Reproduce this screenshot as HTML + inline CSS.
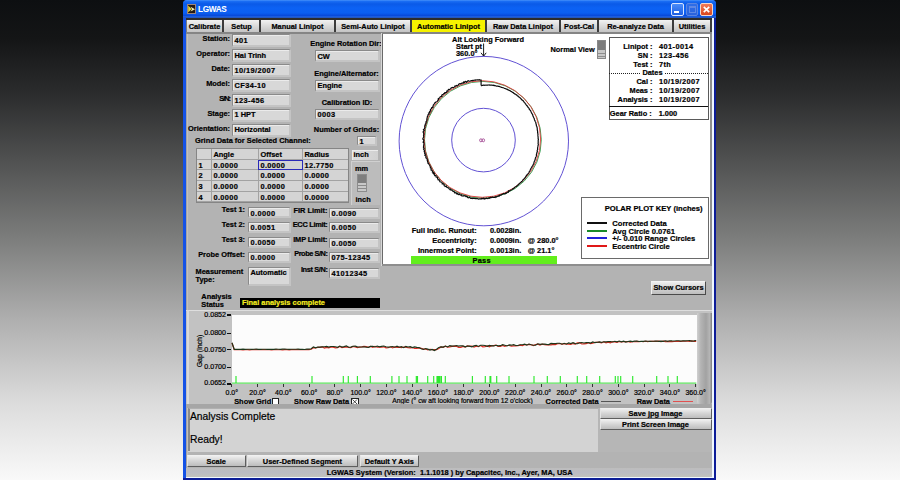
<!DOCTYPE html>
<html><head><meta charset="utf-8"><style>
*{margin:0;padding:0;box-sizing:border-box}
html,body{width:900px;height:480px;overflow:hidden}
body{position:relative;background:linear-gradient(to bottom,#0d0f11 0%,#141516 8%,#2c2d2e 20%,#4f5050 33%,#7d7e7d 50%,#b0b0b0 67%,#dcdcdc 84%,#f9f9f9 100%);font-family:"Liberation Sans",sans-serif;font-weight:bold;font-size:7.4px;color:#000;-webkit-text-stroke-width:0.2px}
.a{position:absolute;white-space:pre;line-height:1}
.fld{position:absolute;background:#d8d8d8;border-top:1px solid #8a8a8a;border-left:1px solid #8a8a8a;border-right:2px solid #c4c4c4;border-bottom:2px solid #c4c4c4;box-shadow:inset 1px 1px 0 #ebebeb}
.fld span{position:absolute;left:1.5px;top:1.6px;white-space:pre;line-height:1}
.tab{position:absolute;top:20px;height:12px;background:linear-gradient(to bottom,#f2f2f2,#dadada 50%,#c4c4c4);border-right:2px solid #3c3c3c;text-align:center;line-height:14.4px}
.btn{position:absolute;background:linear-gradient(to bottom,#eeeeee,#d4d4d4 50%,#bdbdbd);border:1px solid #5e5e5e;border-top-color:#f0f0f0;border-left-color:#e4e4e4;text-align:center;white-space:pre}
.c{position:absolute;white-space:pre;line-height:1;text-align:center}
.r{position:absolute;white-space:pre;line-height:1;text-align:right}
</style></head><body>
<div class="a" style="left:183px;top:0px;width:533px;height:480px;background:#0a48d6;border-radius:4px 4px 0 0"></div>
<div class="a" style="left:183px;top:0px;width:533px;height:18px;border-radius:4px 4px 0 0;background:linear-gradient(to bottom,#4a94fa 0%,#1a6ef4 7%,#0a5ae8 22%,#0c62f4 45%,#0b5ff2 72%,#0848d8 88%,#2a6ee6 95%,#1c3c90 100%)"></div>
<div class="a" style="left:186.5px;top:4px;width:9px;height:10px;background:#241a14;border:1px solid #9c867c"></div>
<svg class="a" style="left:186.5px;top:4px" width="9" height="10"><path d="M1.2 1.5 L4.6 5 L1.2 8.5 Z" fill="#e8d830"/><path d="M3.6 2.8 L8 5.2 L3.6 7.4 L5 5.2 Z" fill="#f4f0b0"/></svg>
<div class="a" style="left:198px;top:6.4px;color:#fff;font-size:8.2px;letter-spacing:-0.3px;-webkit-text-stroke-width:0.05px">LGWAS</div>
<div class="a" style="left:671px;top:3px;width:13px;height:13px;border-radius:2px;border:1px solid #d8e4ff;background:linear-gradient(#4a8cf8,#1c5ee4)"></div>
<div class="a" style="left:674px;top:11px;width:5px;height:2px;background:#fff"></div>
<div class="a" style="left:686px;top:3px;width:12px;height:13px;border-radius:2px;border:1px solid #5a84e0;background:linear-gradient(#2e6ee8,#2a62dc)"></div>
<div class="a" style="left:688.5px;top:5.5px;width:7px;height:7px;border:1px solid #5f88e4;border-top-width:2px"></div>
<div class="a" style="left:700px;top:3px;width:13px;height:13px;border-radius:2px;border:1px solid #f4d8cc;background:linear-gradient(#f07a58,#d8461e)"></div>
<svg class="a" style="left:700px;top:3px" width="13" height="13"><path d="M3.8 3.8 L9.2 9.2 M9.2 3.8 L3.8 9.2" stroke="#fff" stroke-width="1.7"/></svg>
<div class="a" style="left:185.5px;top:18px;width:527px;height:459px;background:#b3b3b3"></div>
<div class="a" style="left:185.5px;top:18px;width:1px;height:459px;background:#a4a4a4"></div>
<div class="a" style="left:186.5px;top:18px;width:1px;height:459px;background:#c4c0bc"></div>
<div class="a" style="left:186px;top:18px;width:527px;height:2px;background:#2c2c2c"></div>
<div class="a" style="left:186px;top:20px;width:527px;height:13px;background:#7c7c7c"></div>
<div class="a" style="left:186px;top:32px;width:527px;height:2px;background:#858585"></div>
<div class="tab" style="left:187px;width:37px">Calibrate</div>
<div class="tab" style="left:224px;width:37px">Setup</div>
<div class="tab" style="left:261px;width:75px">Manual Linipot</div>
<div class="tab" style="left:336px;width:76px">Semi-Auto Linipot</div>
<div class="tab" style="left:412px;width:75px;background:#f6f200">Automatic Linipot</div>
<div class="tab" style="left:487px;width:74px">Raw Data Linipot</div>
<div class="tab" style="left:561px;width:38px">Post-Cal</div>
<div class="tab" style="left:599px;width:75px">Re-analyze Data</div>
<div class="tab" style="left:674px;width:38px">Utilities</div>
<div class="r" style="right:670px;top:35.4px;">Station:</div>
<div class="fld" style="left:232px;top:34.4px;width:59px;height:13px;"><span style="top:1.5px;letter-spacing:0.4px">401</span></div>
<div class="r" style="right:670px;top:50.3px;">Operator:</div>
<div class="fld" style="left:232px;top:49.3px;width:59px;height:13px;"><span style="top:1.5px">Hai Trinh</span></div>
<div class="r" style="right:670px;top:65.2px;">Date:</div>
<div class="fld" style="left:232px;top:64.2px;width:59px;height:13px;"><span style="top:1.5px;letter-spacing:0.4px">10/19/2007</span></div>
<div class="r" style="right:670px;top:80.1px;">Model:</div>
<div class="fld" style="left:232px;top:79.1px;width:59px;height:13px;"><span style="top:1.5px;letter-spacing:0.4px">CF34-10</span></div>
<div class="r" style="right:670px;top:95.0px;;letter-spacing:-1.0px">S/N:</div>
<div class="fld" style="left:232px;top:94px;width:59px;height:13px;"><span style="top:1.5px;letter-spacing:0.4px">123-456</span></div>
<div class="r" style="right:670px;top:109.9px;">Stage:</div>
<div class="fld" style="left:232px;top:108.9px;width:59px;height:13px;"><span style="top:1.5px">1 HPT</span></div>
<div class="r" style="right:670px;top:124.8px;">Orientation:</div>
<div class="fld" style="left:232px;top:123.8px;width:59px;height:13px;"><span style="top:1.5px">Horizontal</span></div>
<div class="c" style="left:246.0px;top:40.3px;width:200px;">Engine Rotation Dir:</div>
<div class="fld" style="left:315px;top:50px;width:65px;height:12px;"><span>CW</span></div>
<div class="c" style="left:246.5px;top:70.3px;width:200px;">Engine/Alternator:</div>
<div class="fld" style="left:315px;top:79.5px;width:65px;height:12px;"><span>Engine</span></div>
<div class="c" style="left:247.0px;top:99.2px;width:200px;">Calibration ID:</div>
<div class="fld" style="left:315px;top:109px;width:65px;height:11px;"><span style="top:1.2px;letter-spacing:0.4px">0003</span></div>
<div class="c" style="left:246.5px;top:126.2px;width:200px;">Number of Grinds:</div>
<div class="fld" style="left:357px;top:135.5px;width:20px;height:10px;"><span style="top:1px">1</span></div>
<div class="a" style="left:195px;top:137px;">Grind Data for Selected Channel:</div>
<div class="a" style="left:196px;top:148px;width:153px;height:55px;background:#a2a2a2;border:1px solid #858585"></div>
<div class="a" style="left:197px;top:149px;width:14px;height:9.8px;background:#d4d4d4"></div>
<div class="a" style="left:198.5px;top:151.0px;"></div>
<div class="a" style="left:212px;top:149px;width:46px;height:9.8px;background:#d4d4d4"></div>
<div class="a" style="left:213.5px;top:151.0px;">Angle</div>
<div class="a" style="left:259px;top:149px;width:43px;height:9.8px;background:#d4d4d4"></div>
<div class="a" style="left:260.5px;top:151.0px;">Offset</div>
<div class="a" style="left:303px;top:149px;width:45px;height:9.8px;background:#d4d4d4"></div>
<div class="a" style="left:304.5px;top:151.0px;">Radius</div>
<div class="a" style="left:197px;top:159.8px;width:14px;height:9.6px;background:#d4d4d4"></div>
<div class="a" style="left:198.5px;top:161.8px;">1</div>
<div class="a" style="left:212px;top:159.8px;width:46px;height:9.6px;background:#d4d4d4"></div>
<div class="a" style="left:213.5px;top:161.8px;letter-spacing:0.35px">0.0000</div>
<div class="a" style="left:259px;top:159.8px;width:43px;height:9.6px;background:#d4d4d4"></div>
<div class="a" style="left:260.5px;top:161.8px;letter-spacing:0.35px">0.0000</div>
<div class="a" style="left:303px;top:159.8px;width:45px;height:9.6px;background:#d4d4d4"></div>
<div class="a" style="left:304.5px;top:161.8px;letter-spacing:0.35px">12.7750</div>
<div class="a" style="left:197px;top:170.4px;width:14px;height:9.6px;background:#d4d4d4"></div>
<div class="a" style="left:198.5px;top:172.4px;">2</div>
<div class="a" style="left:212px;top:170.4px;width:46px;height:9.6px;background:#d4d4d4"></div>
<div class="a" style="left:213.5px;top:172.4px;letter-spacing:0.35px">0.0000</div>
<div class="a" style="left:259px;top:170.4px;width:43px;height:9.6px;background:#d4d4d4"></div>
<div class="a" style="left:260.5px;top:172.4px;letter-spacing:0.35px">0.0000</div>
<div class="a" style="left:303px;top:170.4px;width:45px;height:9.6px;background:#d4d4d4"></div>
<div class="a" style="left:304.5px;top:172.4px;letter-spacing:0.35px">0.0000</div>
<div class="a" style="left:197px;top:181px;width:14px;height:9.6px;background:#d4d4d4"></div>
<div class="a" style="left:198.5px;top:183.0px;">3</div>
<div class="a" style="left:212px;top:181px;width:46px;height:9.6px;background:#d4d4d4"></div>
<div class="a" style="left:213.5px;top:183.0px;letter-spacing:0.35px">0.0000</div>
<div class="a" style="left:259px;top:181px;width:43px;height:9.6px;background:#d4d4d4"></div>
<div class="a" style="left:260.5px;top:183.0px;letter-spacing:0.35px">0.0000</div>
<div class="a" style="left:303px;top:181px;width:45px;height:9.6px;background:#d4d4d4"></div>
<div class="a" style="left:304.5px;top:183.0px;letter-spacing:0.35px">0.0000</div>
<div class="a" style="left:197px;top:191.6px;width:14px;height:9.8px;background:#d4d4d4"></div>
<div class="a" style="left:198.5px;top:193.6px;">4</div>
<div class="a" style="left:212px;top:191.6px;width:46px;height:9.8px;background:#d4d4d4"></div>
<div class="a" style="left:213.5px;top:193.6px;letter-spacing:0.35px">0.0000</div>
<div class="a" style="left:259px;top:191.6px;width:43px;height:9.8px;background:#d4d4d4"></div>
<div class="a" style="left:260.5px;top:193.6px;letter-spacing:0.35px">0.0000</div>
<div class="a" style="left:303px;top:191.6px;width:45px;height:9.8px;background:#d4d4d4"></div>
<div class="a" style="left:304.5px;top:193.6px;letter-spacing:0.35px">0.0000</div>
<div class="a" style="left:258.3px;top:159.5px;width:44.5px;height:10.6px;border:1px solid #2a2ab8"></div>
<div class="a" style="left:351px;top:161px;width:29px;height:44px;background:#bcbcbc;border-top:1px solid #d0d0d0;border-left:1px solid #d0d0d0"></div>
<div class="fld" style="left:352px;top:149.5px;width:26px;height:10px;border:none;background:linear-gradient(to right,#dedede,#d0d0d0)"><span style="top:1.6px">inch</span></div>
<div class="a" style="left:355px;top:165.3px;">mm</div>
<div class="a" style="left:356.5px;top:173.5px;width:10px;height:18px;background:#c8c8c8;border:1px solid #8c8c8c"></div>
<div class="a" style="left:357.5px;top:174.5px;width:8px;height:8.5px;background:#7e7e7e"></div>
<div class="a" style="left:357.5px;top:185px;width:8px;height:1px;background:#8a8a8a"></div>
<div class="a" style="left:357.5px;top:188px;width:8px;height:1px;background:#8a8a8a"></div>
<div class="a" style="left:355.5px;top:195.7px;">inch</div>
<div class="r" style="right:655px;top:206.2px;">Test 1:</div>
<div class="fld" style="left:248px;top:207px;width:43px;height:11px;"><span style="top:1.5px;letter-spacing:0.4px">0.0000</span></div>
<div class="r" style="right:572.5px;top:206.5px;">FIR Limit:</div>
<div class="fld" style="left:329px;top:208px;width:51px;height:11px;"><span style="top:1.2px;letter-spacing:0.4px">0.0090</span></div>
<div class="r" style="right:655px;top:220.7px;">Test 2:</div>
<div class="fld" style="left:248px;top:221.5px;width:43px;height:11px;"><span style="top:1.5px;letter-spacing:0.4px">0.0051</span></div>
<div class="r" style="right:572.5px;top:220.5px;;letter-spacing:-0.3px">ECC Limit:</div>
<div class="fld" style="left:329px;top:222px;width:51px;height:11px;"><span style="top:1.2px;letter-spacing:0.4px">0.0050</span></div>
<div class="r" style="right:655px;top:235.7px;">Test 3:</div>
<div class="fld" style="left:248px;top:236.5px;width:43px;height:11px;"><span style="top:1.5px;letter-spacing:0.4px">0.0050</span></div>
<div class="r" style="right:572.5px;top:236.0px;;letter-spacing:-0.08px">IMP Limit:</div>
<div class="fld" style="left:329px;top:237.5px;width:51px;height:11px;"><span style="top:1.2px;letter-spacing:0.4px">0.0050</span></div>
<div class="r" style="right:655px;top:250.7px;">Probe Offset:</div>
<div class="fld" style="left:248px;top:251.5px;width:43px;height:11px;"><span style="top:1.5px;letter-spacing:0.4px">0.0000</span></div>
<div class="r" style="right:572.5px;top:250.0px;;letter-spacing:-0.45px">Probe S/N:</div>
<div class="fld" style="left:329px;top:251.5px;width:51px;height:11px;"><span style="top:1.2px;letter-spacing:0.4px">075-12345</span></div>
<div class="a" style="left:195.5px;top:268px;">Measurement</div>
<div class="a" style="left:195.5px;top:275.8px;">Type:</div>
<div class="fld" style="left:248px;top:266.5px;width:43px;height:19px;"><span style="top:1.5px">Automatic</span></div>
<div class="r" style="right:572.5px;top:266.2px;;letter-spacing:-0.38px">Inst S/N:</div>
<div class="fld" style="left:329px;top:267.5px;width:51px;height:11px;"><span style="top:1.2px;letter-spacing:0.4px">41012345</span></div>
<div class="a" style="left:381px;top:33px;width:1px;height:233px;background:#d8d8d8"></div>
<div class="a" style="left:382px;top:34px;width:328px;height:231px;background:#ffffff;border-left:1px solid #6a6a6a"></div>
<div class="a" style="left:710px;top:34px;width:2.5px;height:231px;background:#8e8e8e"></div>
<div class="a" style="left:382px;top:264px;width:331px;height:2px;background:#8e8e8e"></div>
<div class="c" style="left:388.0px;top:36px;width:200px;">Alt Looking Forward</div>
<div class="a" style="left:456px;top:42.7px;">Start pt</div>
<div class="a" style="left:456px;top:50px;">360.0°</div>
<svg class="a" style="left:479px;top:43px" width="10" height="15"><path d="M4.6 0.5 V13 M2 9.8 L4.6 13.2 L7.2 9.8" stroke="#000" stroke-width="0.9" fill="none"/></svg>
<div class="a" style="left:550.5px;top:46.3px;">Normal View</div>
<div class="a" style="left:597px;top:40px;width:9px;height:18.5px;background:#c8c8c8;border:1px solid #8a8a8a"></div>
<div class="a" style="left:598px;top:41px;width:7px;height:9px;background:#7c7c7c"></div>
<div class="a" style="left:598px;top:52.5px;width:7px;height:1px;background:#8e8e8e"></div>
<div class="a" style="left:598px;top:55.5px;width:7px;height:1px;background:#8e8e8e"></div>
<svg class="a" style="left:0;top:0" width="900" height="480"><circle cx="483.8" cy="141.1" r="84.7" fill="none" stroke="#6252d4" stroke-width="1"/><circle cx="483.5" cy="140.1" r="31.8" fill="none" stroke="#6252d4" stroke-width="1"/><circle cx="482.9" cy="139.8" r="58.4" fill="none" stroke="#2a9a4a" stroke-width="0.9"/><circle cx="482.3" cy="139.0" r="58.3" fill="none" stroke="#e03a3a" stroke-width="0.9"/><path d="M481.10 85.57 L481.71 85.55 L482.32 85.27 L482.92 85.43 L483.54 85.18 L484.15 85.19 L484.76 85.27 L485.39 85.05 L485.99 85.21 L486.63 85.03 L487.23 85.17 L487.85 85.16 L488.49 85.03 L489.14 84.89 L489.72 85.19 L490.35 85.18 L491.00 85.07 L491.65 84.99 L492.25 85.20 L492.85 85.34 L493.53 85.19 L494.07 85.64 L494.77 85.42 L495.33 85.75 L495.94 85.91 L496.56 86.05 L497.20 86.10 L497.88 86.05 L498.41 86.44 L499.08 86.44 L499.71 86.58 L500.28 86.86 L500.92 86.97 L501.45 87.34 L502.06 87.54 L502.69 87.69 L503.37 87.74 L503.93 88.05 L504.51 88.32 L505.15 88.47 L505.72 88.76 L506.28 89.07 L506.96 89.16 L507.53 89.47 L508.02 89.90 L508.67 90.08 L509.24 90.39 L509.88 90.57 L510.42 90.94 L510.89 91.40 L511.61 91.50 L511.97 92.12 L512.60 92.36 L513.22 92.60 L513.63 93.15 L514.25 93.41 L514.68 93.92 L515.37 94.10 L515.92 94.45 L516.40 94.91 L517.00 95.21 L517.37 95.79 L517.99 96.09 L518.47 96.54 L518.97 96.97 L519.43 97.44 L520.03 97.77 L520.55 98.18 L520.90 98.77 L521.43 99.18 L521.72 99.81 L522.38 100.10 L522.82 100.60 L523.38 100.99 L523.78 101.52 L524.06 102.16 L524.53 102.63 L525.05 103.07 L525.27 103.74 L525.83 104.15 L526.15 104.75 L526.54 105.29 L526.92 105.83 L527.55 106.21 L527.73 106.90 L528.15 107.42 L528.58 107.94 L529.11 108.40 L529.20 109.13 L529.69 109.62 L530.07 110.18 L530.53 110.69 L530.85 111.29 L531.19 111.87 L531.31 112.57 L531.68 113.14 L531.97 113.75 L532.46 114.26 L532.78 114.86 L532.78 115.60 L533.07 116.21 L533.36 116.82 L533.63 117.44 L533.98 118.03 L534.27 118.64 L534.39 119.32 L534.53 119.99 L534.92 120.57 L535.13 121.22 L535.42 121.84 L535.77 122.44 L535.87 123.13 L536.00 123.80 L536.22 124.44 L536.42 125.09 L536.35 125.81 L536.84 126.40 L536.95 127.07 L537.14 127.73 L537.25 128.41 L537.22 129.11 L537.35 129.78 L537.35 130.47 L537.66 131.11 L537.54 131.82 L537.63 132.49 L537.77 133.17 L537.83 133.85 L537.97 134.52 L537.92 135.21 L537.95 135.89 L538.06 136.57 L538.07 137.25 L538.21 137.93 L538.10 138.62 L538.45 139.30 L538.35 139.99 L538.16 140.67 L538.19 141.35 L538.22 142.04 L538.20 142.72 L538.07 143.40 L538.31 144.11 L538.32 144.80 L538.06 145.46 L538.00 146.15 L537.77 146.81 L537.69 147.49 L537.70 148.18 L537.57 148.86 L537.69 149.57 L537.32 150.20 L537.14 150.87 L537.38 151.62 L537.08 152.25 L536.79 152.89 L536.79 153.60 L536.43 154.21 L536.46 154.93 L536.46 155.64 L536.23 156.29 L535.98 156.93 L535.62 157.54 L535.45 158.21 L535.17 158.83 L535.17 159.56 L534.86 160.18 L534.72 160.86 L534.31 161.43 L534.02 162.06 L533.98 162.78 L533.78 163.45 L533.46 164.06 L533.16 164.68 L532.88 165.30 L532.56 165.91 L532.08 166.43 L531.88 167.10 L531.51 167.67 L531.07 168.21 L530.75 168.81 L530.50 169.46 L530.15 170.05 L529.95 170.73 L529.69 171.37 L529.16 171.84 L528.95 172.53 L528.59 173.11 L528.20 173.67 L527.62 174.10 L527.18 174.62 L526.78 175.17 L526.37 175.71 L525.96 176.26 L525.67 176.90 L525.33 177.51 L524.88 178.02 L524.33 178.45 L523.94 179.01 L523.54 179.57 L522.87 179.88 L522.58 180.54 L522.18 181.10 L521.68 181.56 L521.19 182.04 L520.63 182.44 L520.06 182.82 L519.73 183.47 L519.11 183.79 L518.73 184.39 L518.26 184.89 L517.60 185.16 L517.08 185.60 L516.69 186.20 L516.11 186.55 L515.44 186.79 L514.89 187.19 L514.36 187.60 L513.98 188.25 L513.41 188.61 L512.70 188.77 L512.29 189.38 L511.76 189.80 L511.12 190.06 L510.48 190.31 L509.94 190.73 L509.28 190.93 L508.49 190.88 L508.44 192.22 L507.66 192.20 L507.00 192.39 L506.61 193.14 L505.75 192.90 L505.36 193.67 L504.72 193.91 L503.81 193.51 L503.22 193.83 L502.62 194.14 L501.97 194.33 L501.50 194.97 L500.73 194.84 L500.17 195.26 L499.43 195.16 L499.08 196.26 L498.24 195.84 L497.64 196.16 L497.03 196.50 L496.49 197.06 L495.69 196.68 L495.18 197.43 L494.41 197.11 L493.76 197.30 L493.11 197.44 L492.33 196.99 L491.77 197.62 L491.06 197.44 L490.36 197.35 L489.85 198.40 L489.08 197.76 L488.46 198.21 L487.83 198.59 L487.14 198.47 L486.45 198.26 L485.80 198.55 L485.13 198.65 L484.48 198.97 L483.76 198.20 L483.12 198.77 L482.44 198.42 L481.77 198.46 L481.10 199.06 L480.43 198.74 L479.75 198.80 L479.07 199.02 L478.39 199.17 L477.75 198.57 L477.06 198.73 L476.40 198.55 L475.73 198.50 L475.04 198.65 L474.40 198.29 L473.72 198.30 L473.07 198.14 L472.32 198.59 L471.70 198.20 L470.99 198.29 L470.31 198.25 L469.81 197.31 L469.08 197.52 L468.32 197.83 L467.69 197.55 L467.23 196.57 L466.59 196.38 L465.85 196.57 L465.32 195.96 L464.62 195.96 L464.04 195.57 L463.19 196.04 L462.50 195.96 L461.82 195.86 L461.49 194.79 L460.62 195.18 L460.02 194.87 L459.62 194.04 L458.66 194.60 L458.00 194.42 L457.74 193.32 L456.77 193.83 L456.43 192.94 L455.78 192.73 L454.91 192.97 L454.39 192.48 L454.17 191.45 L453.43 191.41 L452.79 191.16 L452.31 190.64 L451.82 190.14 L451.17 189.91 L450.34 189.96 L450.23 188.88 L449.32 189.04 L448.83 188.55 L448.57 187.74 L447.80 187.65 L447.05 187.54 L446.59 187.02 L446.38 186.17 L445.17 186.63 L444.79 186.01 L444.12 185.74 L444.27 184.50 L443.63 184.20 L443.31 183.55 L442.22 183.75 L442.13 182.83 L441.75 182.24 L441.03 182.02 L440.14 181.95 L439.73 181.38 L439.74 180.42 L439.38 179.83 L438.24 179.95 L438.10 179.16 L437.53 178.74 L437.65 177.74 L437.24 177.19 L436.23 177.14 L436.05 176.41 L435.97 175.61 L434.74 175.69 L434.62 174.92 L434.06 174.48 L434.37 173.41 L433.22 173.38 L433.63 172.27 L432.46 172.23 L432.50 171.38 L432.26 170.72 L431.69 170.27 L430.96 169.90 L431.30 168.90 L431.11 168.22 L430.37 167.85 L430.35 167.08 L430.18 166.40 L429.82 165.82 L429.65 165.14 L429.19 164.60 L428.79 164.03 L428.52 163.40 L427.75 162.99 L428.01 162.13 L427.52 161.58 L427.63 160.80 L427.20 160.23 L427.34 159.45 L426.85 158.90 L426.90 158.15 L425.87 157.77 L425.88 157.04 L426.09 156.26 L425.58 155.69 L424.86 155.17 L425.65 154.24 L424.65 153.78 L424.95 153.00 L424.72 152.34 L424.18 151.75 L424.56 150.97 L424.30 150.31 L423.96 149.67 L423.50 149.04 L424.15 148.24 L423.48 147.64 L423.53 146.93 L423.54 146.23 L423.74 145.51 L423.74 144.81 L424.03 144.10 L423.89 143.42 L423.92 142.73 L423.08 142.08 L423.64 141.37 L423.73 140.67 L423.81 139.99 L422.90 139.30 L422.87 138.60 L423.12 137.91 L423.60 137.23 L423.68 136.55 L423.65 135.86 L423.50 135.15 L423.91 134.49 L423.62 133.78 L423.90 133.11 L423.15 132.33 L423.22 131.63 L423.81 131.01 L424.27 130.38 L423.52 129.56 L424.41 129.01 L424.47 128.32 L425.02 127.73 L424.71 126.96 L424.74 126.26 L424.86 125.58 L425.37 124.99 L425.18 124.23 L425.93 123.72 L425.82 122.98 L426.20 122.38 L426.04 121.61 L426.66 121.08 L426.89 120.44 L426.78 119.68 L427.09 119.06 L426.93 118.27 L427.23 117.64 L427.23 116.90 L427.59 116.30 L427.79 115.63 L427.88 114.92 L428.70 114.53 L429.05 113.93 L428.63 112.96 L429.83 112.79 L429.52 111.86 L429.92 111.29 L430.87 111.02 L430.36 109.96 L430.64 109.32 L431.25 108.88 L431.49 108.21 L431.77 107.57 L432.81 107.42 L432.79 106.59 L433.18 106.03 L433.23 105.23 L433.65 104.68 L434.02 104.10 L434.66 103.71 L434.77 102.93 L435.38 102.53 L435.79 101.98 L436.65 101.79 L437.26 101.42 L437.59 100.81 L437.83 100.12 L438.50 99.81 L438.30 98.70 L439.01 98.42 L439.41 97.86 L439.89 97.37 L440.32 96.83 L440.96 96.51 L441.85 96.46 L441.69 95.29 L442.23 94.86 L442.93 94.62 L443.41 94.14 L443.83 93.58 L444.80 93.68 L444.81 92.62 L445.70 92.65 L446.36 92.40 L446.75 91.80 L446.97 90.94 L447.88 91.05 L448.06 90.13 L448.46 89.50 L449.34 89.60 L449.98 89.33 L450.48 88.86 L450.93 88.29 L451.46 87.85 L452.13 87.65 L452.70 87.28 L453.62 87.54 L454.16 87.14 L454.70 86.71 L455.03 85.87 L455.87 86.03 L456.33 85.45 L457.22 85.76 L457.81 85.43 L458.32 84.92 L458.75 84.21 L459.36 83.92 L460.00 83.68 L460.79 83.86 L461.32 83.37 L461.98 83.20 L462.61 82.97 L463.38 83.15 L463.74 82.05 L464.63 82.65 L465.01 81.55 L465.68 81.41 L466.61 82.30 L467.13 81.62 L467.68 81.03 L468.30 80.70 L469.10 81.16 L469.80 81.23 L470.42 80.94 L471.03 80.53 L471.75 80.70 L472.39 80.45 L473.08 80.52 L473.72 80.28 L474.37 80.02 L475.07 80.27 L475.72 79.93 L476.40 79.99 L477.06 79.79 L477.73 79.82 L478.42 79.97 L479.08 79.68 L479.76 79.82 L480.43 79.99 L481.10 80.00 L481.10 85.57" fill="none" stroke="#0c0c0c" stroke-width="1.2"/><ellipse cx="480.9" cy="140.3" rx="1.3" ry="1.5" fill="none" stroke="#9a3a8a" stroke-width="0.8"/><ellipse cx="483.3" cy="140.3" rx="1.3" ry="1.5" fill="none" stroke="#9a3a8a" stroke-width="0.8"/></svg>
<div class="a" style="left:608.5px;top:36.5px;width:100px;height:83px;background:#fff;border:1px solid #5a5a5a"></div>
<div class="r" style="right:247.5px;top:43.2px;">Linipot :</div>
<div class="a" style="left:659px;top:43.2px;letter-spacing:0.4px">401-0014</div>
<div class="r" style="right:247.5px;top:51.9px;">SN :</div>
<div class="a" style="left:659px;top:51.9px;letter-spacing:0.4px">123-456</div>
<div class="r" style="right:247.5px;top:60.6px;">Test :</div>
<div class="a" style="left:659px;top:60.6px;letter-spacing:0.4px">7th</div>
<div class="r" style="right:247.5px;top:78.1px;">Cal :</div>
<div class="a" style="left:659px;top:78.1px;letter-spacing:0.4px">10/19/2007</div>
<div class="r" style="right:247.5px;top:86.8px;">Meas :</div>
<div class="a" style="left:659px;top:86.8px;letter-spacing:0.4px">10/19/2007</div>
<div class="r" style="right:247.5px;top:95.5px;">Analysis :</div>
<div class="a" style="left:659px;top:95.5px;letter-spacing:0.4px">10/19/2007</div>
<div class="a" style="left:609px;top:73.3px;width:99px;height:0;border-top:1px dotted #222"></div>
<div class="a" style="left:641px;top:69px;width:23px;height:8px;background:#fff"></div>
<div class="c" style="left:632.5px;top:69.3px;width:40px;">Dates</div>
<div class="a" style="left:609px;top:106px;width:99px;height:1.2px;background:#111"></div>
<div class="a" style="left:609.8px;top:109.5px;">Gear Ratio :</div>
<div class="a" style="left:658.7px;top:109.5px;">1.000</div>
<div class="a" style="left:581px;top:197px;width:128px;height:62px;background:#fff;border:1px solid #6a6a6a"></div>
<div class="r" style="right:197.5px;top:204.5px;font-size:7.6px">POLAR PLOT KEY (inches)</div>
<div class="a" style="left:586.5px;top:222px;width:20px;height:2px;background:#101010"></div>
<div class="a" style="left:612.3px;top:219.7px;font-size:7.6px">Corrected Data</div>
<div class="a" style="left:586.5px;top:230px;width:20px;height:2px;background:#1a8a2a"></div>
<div class="a" style="left:612.3px;top:227.5px;font-size:7.6px">Avg Circle 0.0761</div>
<div class="a" style="left:586.5px;top:237px;width:20px;height:2px;background:#2020d8"></div>
<div class="a" style="left:612.3px;top:235.0px;font-size:7.6px">+/- 0.010 Range Circles</div>
<div class="a" style="left:586.5px;top:245px;width:20px;height:2px;background:#e01818"></div>
<div class="a" style="left:612.3px;top:242.5px;font-size:7.6px">Eccentric Circle</div>
<div class="r" style="right:423.3px;top:226.8px;">Full Indic. Runout:</div>
<div class="a" style="left:490px;top:226.8px;">0.0028in.</div>
<div class="r" style="right:423.3px;top:236.6px;">Eccentricity:</div>
<div class="a" style="left:490px;top:236.6px;">0.0009in.</div>
<div class="a" style="left:527.8px;top:236.6px;">@ 280.0°</div>
<div class="r" style="right:423.3px;top:246.6px;">Innermost Point:</div>
<div class="a" style="left:490px;top:246.6px;">0.0013in.</div>
<div class="a" style="left:527.8px;top:246.6px;">@ 21.1°</div>
<div class="a" style="left:411px;top:255.7px;width:146px;height:8.3px;background:#62ee1c"></div>
<div class="c" style="left:461.7px;top:256.5px;width:40px;letter-spacing:0.3px">Pass</div>
<div class="btn" style="left:651px;top:280.5px;width:55px;height:14px;line-height:12px;border-color:#4a4a4a;border-top-color:#f4f4f4;border-left-color:#f0f0f0">Show Cursors</div>
<div class="a" style="left:201.3px;top:293.3px;">Analysis</div>
<div class="a" style="left:201.3px;top:301px;">Status</div>
<div class="a" style="left:240px;top:297.5px;width:139.5px;height:10.5px;background:#000"></div>
<div class="a" style="left:242px;top:299.3px;color:#f4ec20">Final analysis complete</div>
<div class="a" style="left:186px;top:309.5px;width:527px;height:98px;background:#c2c2c2;border-top:1px solid #dedede"></div>
<div class="a" style="left:187px;top:310px;width:2px;height:98px;background:#dadada"></div>
<div class="a" style="left:697px;top:313px;width:15px;height:92px;background:linear-gradient(to right,#d0d0d0,#b4b4b4 25%,#a2a2a2 60%,#b6b6b6 85%,#7a7a7a);border-radius:0 0 4px 4px"></div>
<div class="a" style="left:232px;top:314.5px;width:465px;height:69px;background:#fcfcfc"></div>
<div class="r" style="right:674px;top:311.5px;font-weight:normal;font-size:7.1px">0.0852</div>
<div class="a" style="left:227px;top:314.3px;width:4px;height:1.8px;background:#111"></div>
<div class="r" style="right:674px;top:329.7px;font-weight:normal;font-size:7.1px">0.0800</div>
<div class="a" style="left:227px;top:332.5px;width:4px;height:1.2px;background:#111"></div>
<div class="r" style="right:674px;top:346.5px;font-weight:normal;font-size:7.1px">0.0750</div>
<div class="a" style="left:227px;top:349.3px;width:4px;height:1.2px;background:#111"></div>
<div class="r" style="right:674px;top:364.0px;font-weight:normal;font-size:7.1px">0.0700</div>
<div class="a" style="left:227px;top:366.8px;width:4px;height:1.2px;background:#111"></div>
<div class="r" style="right:674px;top:380.0px;font-weight:normal;font-size:7.1px">0.0652</div>
<div class="a" style="left:227px;top:382.8px;width:4px;height:1.8px;background:#111"></div>
<div class="a" style="left:198.5px;top:351px;transform:translate(-50%,-50%) rotate(-90deg);font-weight:normal;font-size:7px">Gap (inch)</div>
<div class="c" style="left:211.8px;top:389.3px;width:40px;font-weight:normal;font-size:7px">0.0°</div>
<div class="a" style="left:231.3px;top:384px;width:1px;height:3px;background:#333"></div>
<div class="c" style="left:237.56666666666666px;top:389.3px;width:40px;font-weight:normal;font-size:7px">20.0°</div>
<div class="a" style="left:257.06666666666666px;top:384px;width:1px;height:3px;background:#333"></div>
<div class="c" style="left:263.33333333333337px;top:389.3px;width:40px;font-weight:normal;font-size:7px">40.0°</div>
<div class="a" style="left:282.83333333333337px;top:384px;width:1px;height:3px;background:#333"></div>
<div class="c" style="left:289.1px;top:389.3px;width:40px;font-weight:normal;font-size:7px">60.0°</div>
<div class="a" style="left:308.6px;top:384px;width:1px;height:3px;background:#333"></div>
<div class="c" style="left:314.8666666666667px;top:389.3px;width:40px;font-weight:normal;font-size:7px">80.0°</div>
<div class="a" style="left:334.3666666666667px;top:384px;width:1px;height:3px;background:#333"></div>
<div class="c" style="left:340.6333333333333px;top:389.3px;width:40px;font-weight:normal;font-size:7px">100.0°</div>
<div class="a" style="left:360.1333333333333px;top:384px;width:1px;height:3px;background:#333"></div>
<div class="c" style="left:366.40000000000003px;top:389.3px;width:40px;font-weight:normal;font-size:7px">120.0°</div>
<div class="a" style="left:385.90000000000003px;top:384px;width:1px;height:3px;background:#333"></div>
<div class="c" style="left:392.1666666666667px;top:389.3px;width:40px;font-weight:normal;font-size:7px">140.0°</div>
<div class="a" style="left:411.6666666666667px;top:384px;width:1px;height:3px;background:#333"></div>
<div class="c" style="left:417.93333333333334px;top:389.3px;width:40px;font-weight:normal;font-size:7px">160.0°</div>
<div class="a" style="left:437.43333333333334px;top:384px;width:1px;height:3px;background:#333"></div>
<div class="c" style="left:443.7px;top:389.3px;width:40px;font-weight:normal;font-size:7px">180.0°</div>
<div class="a" style="left:463.2px;top:384px;width:1px;height:3px;background:#333"></div>
<div class="c" style="left:469.4666666666667px;top:389.3px;width:40px;font-weight:normal;font-size:7px">200.0°</div>
<div class="a" style="left:488.9666666666667px;top:384px;width:1px;height:3px;background:#333"></div>
<div class="c" style="left:495.23333333333335px;top:389.3px;width:40px;font-weight:normal;font-size:7px">220.0°</div>
<div class="a" style="left:514.7333333333333px;top:384px;width:1px;height:3px;background:#333"></div>
<div class="c" style="left:521.0px;top:389.3px;width:40px;font-weight:normal;font-size:7px">240.0°</div>
<div class="a" style="left:540.5px;top:384px;width:1px;height:3px;background:#333"></div>
<div class="c" style="left:546.7666666666667px;top:389.3px;width:40px;font-weight:normal;font-size:7px">260.0°</div>
<div class="a" style="left:566.2666666666667px;top:384px;width:1px;height:3px;background:#333"></div>
<div class="c" style="left:572.5333333333333px;top:389.3px;width:40px;font-weight:normal;font-size:7px">280.0°</div>
<div class="a" style="left:592.0333333333333px;top:384px;width:1px;height:3px;background:#333"></div>
<div class="c" style="left:598.3px;top:389.3px;width:40px;font-weight:normal;font-size:7px">300.0°</div>
<div class="a" style="left:617.8px;top:384px;width:1px;height:3px;background:#333"></div>
<div class="c" style="left:624.0666666666666px;top:389.3px;width:40px;font-weight:normal;font-size:7px">320.0°</div>
<div class="a" style="left:643.5666666666666px;top:384px;width:1px;height:3px;background:#333"></div>
<div class="c" style="left:649.8333333333334px;top:389.3px;width:40px;font-weight:normal;font-size:7px">340.0°</div>
<div class="a" style="left:669.3333333333334px;top:384px;width:1px;height:3px;background:#333"></div>
<div class="c" style="left:675.5999999999999px;top:389.3px;width:40px;font-weight:normal;font-size:7px">360.0°</div>
<div class="a" style="left:695.0999999999999px;top:384px;width:1px;height:3px;background:#333"></div>
<div class="a" style="left:234.2px;top:397.8px;">Show Grid</div>
<div class="a" style="left:271.5px;top:397.5px;width:7px;height:7.5px;background:#fff;border:1px solid #222"></div>
<div class="a" style="left:294px;top:397.8px;">Show Raw Data</div>
<div class="a" style="left:351px;top:397.8px;width:7.5px;height:7.5px;background:#fff;border:1px solid #222"></div>
<svg class="a" style="left:351px;top:397.8px" width="8" height="8"><path d="M1.5 1.5 L6 6 M6 1.5 L1.5 6" stroke="#222" stroke-width="0.8"/></svg>
<div class="a" style="left:392.2px;top:398.2px;font-weight:normal;font-size:6.75px">Angle (° cw aft looking forward from 12 o'clock)</div>
<div class="a" style="left:545.6px;top:397.8px;">Corrected Data</div>
<div class="a" style="left:601px;top:401px;width:20px;height:1px;background:#555"></div>
<div class="a" style="left:636.7px;top:397.8px;">Raw Data</div>
<div class="a" style="left:673.3px;top:401px;width:20px;height:1.3px;background:#e05050"></div>
<svg class="a" style="left:0;top:0" width="900" height="480"><path d="M232 383.1 H696.3" stroke="#5ae05a" stroke-width="1.3"/><path d="M236.0 383 V376M312.0 383 V376M343.3 383 V376M348.3 383 V376M357.4 383 V376M370.3 383 V376M391.9 383 V376M399.0 383 V376M407.0 383 V376M416.3 383 V376M417.5 383 V376M427.7 383 V376M433.7 383 V376M437.0 383 V376M438.0 383 V376M439.0 383 V376M440.0 383 V376M441.4 383 V376M445.3 383 V376M472.4 383 V376M485.3 383 V376M490.0 383 V376M490.8 383 V376M496.7 383 V376M509.0 383 V376M534.0 383 V376M547.3 383 V376M560.3 383 V376M577.3 383 V376M586.7 383 V376M599.7 383 V376M615.3 383 V376M618.0 383 V376M620.7 383 V376M632.7 383 V376M656.7 383 V376M668.0 383 V376M677.3 383 V376" stroke="#2ee82e" stroke-width="1.15"/><path d="M232.0 343.04 L234.2 349.54 L236.4 349.59 L238.6 349.50 L240.8 349.75 L243.0 349.78 L245.2 349.77 L247.4 349.61 L249.6 349.80 L251.8 349.61 L254.0 349.58 L256.2 349.53 L258.4 349.59 L260.6 349.57 L262.8 349.65 L265.0 349.61 L267.2 349.77 L269.4 349.69 L271.6 349.78 L273.8 349.72 L276.0 349.72 L278.2 349.73 L280.4 349.59 L282.6 349.78 L284.8 349.64 L287.0 349.59 L289.2 349.79 L291.4 349.70 L293.6 349.67 L295.8 349.55 L298.0 349.56 L300.2 349.65 L302.4 349.77 L304.6 349.63 L306.8 349.56 L309.0 349.60 L311.2 349.23 L313.4 347.74 L315.6 347.96 L317.8 347.42 L320.0 347.32 L322.2 346.80 L324.4 348.12 L326.6 347.38 L328.8 347.87 L331.0 346.94 L333.2 347.09 L335.4 347.88 L337.6 347.71 L339.8 346.41 L342.0 347.66 L344.2 347.16 L346.4 346.82 L348.6 347.44 L350.8 347.67 L353.0 346.38 L355.2 347.01 L357.4 347.64 L359.6 347.21 L361.8 346.93 L364.0 346.31 L366.2 346.61 L368.4 347.24 L370.6 346.47 L372.8 347.24 L375.0 346.46 L377.2 347.08 L379.4 346.90 L381.6 347.25 L383.8 346.83 L386.0 347.85 L388.2 347.77 L390.4 346.82 L392.6 347.94 L394.8 346.99 L397.0 347.31 L399.2 347.22 L401.4 347.63 L403.6 347.00 L405.8 347.19 L408.0 347.74 L410.2 347.94 L412.4 347.54 L414.6 348.35 L416.8 348.49 L419.0 347.95 L421.2 348.42 L423.4 349.08 L425.6 348.99 L427.8 349.84 L430.0 349.25 L432.2 349.55 L434.4 349.63 L436.6 349.58 L438.8 348.52 L441.0 347.00 L443.2 347.30 L445.4 346.18 L447.6 347.02 L449.8 346.90 L452.0 346.46 L454.2 346.15 L456.4 346.32 L458.6 347.33 L460.8 347.35 L463.0 346.43 L465.2 347.13 L467.4 345.92 L469.6 346.35 L471.8 346.03 L474.0 347.03 L476.2 346.25 L478.4 346.73 L480.6 345.58 L482.8 346.86 L485.0 346.55 L487.2 345.88 L489.4 346.76 L491.6 345.66 L493.8 345.69 L496.0 345.17 L498.2 346.49 L500.4 346.48 L502.6 345.36 L504.8 346.39 L507.0 345.49 L509.2 345.50 L511.4 346.20 L513.6 345.96 L515.8 345.93 L518.0 345.56 L520.2 345.07 L522.4 345.69 L524.6 344.74 L526.8 344.74 L529.0 344.35 L531.2 344.72 L533.4 345.48 L535.6 344.48 L537.8 344.15 L540.0 345.00 L542.2 344.21 L544.4 344.72 L546.6 344.84 L548.8 344.64 L551.0 344.83 L553.2 344.34 L555.4 344.53 L557.6 343.72 L559.8 343.50 L562.0 344.07 L564.2 343.72 L566.4 343.81 L568.6 344.19 L570.8 344.39 L573.0 343.55 L575.2 344.02 L577.4 342.75 L579.6 342.79 L581.8 344.00 L584.0 343.86 L586.2 343.69 L588.4 342.71 L590.6 343.67 L592.8 343.07 L595.0 342.43 L597.2 342.24 L599.4 342.34 L601.6 342.86 L603.8 341.82 L606.0 342.75 L608.2 342.13 L610.4 342.78 L612.6 341.61 L614.8 342.03 L617.0 342.33 L619.2 341.54 L621.4 341.83 L623.6 341.61 L625.8 341.54 L628.0 341.54 L630.2 342.22 L632.4 341.56 L634.6 341.76 L636.8 341.31 L639.0 341.54 L641.2 341.52 L643.4 341.53 L645.6 341.25 L647.8 341.61 L650.0 341.26 L652.2 341.41 L654.4 341.26 L656.6 341.47 L658.8 341.20 L661.0 341.60 L663.2 341.22 L665.4 341.65 L667.6 341.36 L669.8 341.61 L672.0 341.58 L674.2 341.51 L676.4 341.47 L678.6 341.23 L680.8 341.47 L683.0 341.08 L685.2 341.25 L687.4 340.99 L689.6 341.34 L691.8 340.91 L694.0 341.32 L696.2 341.35" fill="none" stroke="#e02a20" stroke-width="1.2"/><path d="M232.0 342.70 L234.2 349.30 L236.4 349.25 L238.6 349.40 L240.8 349.38 L243.0 349.19 L245.2 349.36 L247.4 349.24 L249.6 349.27 L251.8 349.33 L254.0 349.28 L256.2 349.16 L258.4 349.40 L260.6 349.43 L262.8 349.23 L265.0 349.21 L267.2 349.44 L269.4 349.39 L271.6 349.42 L273.8 349.31 L276.0 349.16 L278.2 349.29 L280.4 349.34 L282.6 349.16 L284.8 349.19 L287.0 349.25 L289.2 349.37 L291.4 349.23 L293.6 349.24 L295.8 349.27 L298.0 349.20 L300.2 349.42 L302.4 349.22 L304.6 349.45 L306.8 349.19 L309.0 349.18 L311.2 348.79 L313.4 346.92 L315.6 347.82 L317.8 347.06 L320.0 347.19 L322.2 346.87 L324.4 346.73 L326.6 346.46 L328.8 347.17 L331.0 346.51 L333.2 346.51 L335.4 346.77 L337.6 347.33 L339.8 346.04 L342.0 347.03 L344.2 346.63 L346.4 345.88 L348.6 347.24 L350.8 347.14 L353.0 346.24 L355.2 346.11 L357.4 346.90 L359.6 346.97 L361.8 347.04 L364.0 346.73 L366.2 347.08 L368.4 347.30 L370.6 346.38 L372.8 346.31 L375.0 346.99 L377.2 346.05 L379.4 346.84 L381.6 346.34 L383.8 346.05 L386.0 346.75 L388.2 347.06 L390.4 346.84 L392.6 346.52 L394.8 347.24 L397.0 346.25 L399.2 347.26 L401.4 346.66 L403.6 347.69 L405.8 346.39 L408.0 347.00 L410.2 346.69 L412.4 347.54 L414.6 346.86 L416.8 347.38 L419.0 347.61 L421.2 348.77 L423.4 349.42 L425.6 348.58 L427.8 349.12 L430.0 350.11 L432.2 349.47 L434.4 350.53 L436.6 349.22 L438.8 347.41 L441.0 346.88 L443.2 347.05 L445.4 346.04 L447.6 346.95 L449.8 345.60 L452.0 346.12 L454.2 346.05 L456.4 345.55 L458.6 346.08 L460.8 345.74 L463.0 345.86 L465.2 346.78 L467.4 346.14 L469.6 346.15 L471.8 346.77 L474.0 345.88 L476.2 345.33 L478.4 346.45 L480.6 345.24 L482.8 345.22 L485.0 345.46 L487.2 346.37 L489.4 345.38 L491.6 345.85 L493.8 345.94 L496.0 345.23 L498.2 345.90 L500.4 345.66 L502.6 344.70 L504.8 345.32 L507.0 345.99 L509.2 344.88 L511.4 345.19 L513.6 344.68 L515.8 345.46 L518.0 345.46 L520.2 344.74 L522.4 344.71 L524.6 344.22 L526.8 345.15 L529.0 344.05 L531.2 344.71 L533.4 345.27 L535.6 345.21 L537.8 343.78 L540.0 344.33 L542.2 344.18 L544.4 344.06 L546.6 344.37 L548.8 344.56 L551.0 343.40 L553.2 343.58 L555.4 343.63 L557.6 343.30 L559.8 343.29 L562.0 344.18 L564.2 343.27 L566.4 344.19 L568.6 342.98 L570.8 343.54 L573.0 342.64 L575.2 343.64 L577.4 343.71 L579.6 342.70 L581.8 342.47 L584.0 342.99 L586.2 342.60 L588.4 342.64 L590.6 343.06 L592.8 341.98 L595.0 342.68 L597.2 342.23 L599.4 341.91 L601.6 342.43 L603.8 341.76 L606.0 341.87 L608.2 341.59 L610.4 341.54 L612.6 341.99 L614.8 341.24 L617.0 341.84 L619.2 341.08 L621.4 341.91 L623.6 341.22 L625.8 342.15 L628.0 341.50 L630.2 341.20 L632.4 341.59 L634.6 341.09 L636.8 341.08 L639.0 341.48 L641.2 341.41 L643.4 341.43 L645.6 340.99 L647.8 341.20 L650.0 341.40 L652.2 341.21 L654.4 341.12 L656.6 340.97 L658.8 341.34 L661.0 341.06 L663.2 341.33 L665.4 340.81 L667.6 341.31 L669.8 340.73 L672.0 340.92 L674.2 341.04 L676.4 340.75 L678.6 340.77 L680.8 341.13 L683.0 340.71 L685.2 340.82 L687.4 340.80 L689.6 340.70 L691.8 341.07 L694.0 340.86 L696.2 340.52" fill="none" stroke="#1c361a" stroke-width="1.15"/></svg>
<div class="a" style="left:186px;top:404px;width:527px;height:4px;background:#a6a6a6"></div>
<div class="a" style="left:187.5px;top:408.3px;width:511px;height:44px;background:#d3d3d3"></div>
<div class="a" style="left:187.5px;top:408.3px;width:410.7px;height:42.5px;background:#d3d3d3;border-left:2px solid #8a8a8a;border-top:1px solid #b0b0b0"></div>
<div class="a" style="left:598.2px;top:408px;width:115px;height:44px;background:#b6b6b6"></div>
<div class="a" style="left:190px;top:412px;font-weight:normal;font-size:10.3px">Analysis Complete</div>
<div class="a" style="left:190px;top:434.6px;font-weight:normal;font-size:10.3px">Ready!</div>
<div class="btn" style="left:599.5px;top:408px;width:112px;height:11px;line-height:9.5px">Save jpg Image</div>
<div class="btn" style="left:599.5px;top:419px;width:112px;height:11px;line-height:9.5px">Print Screen Image</div>
<div class="btn" style="left:186.7px;top:454.7px;width:59px;height:12.5px;line-height:11px">Scale</div>
<div class="btn" style="left:246.7px;top:454.7px;width:111.5px;height:12.5px;line-height:11px">User-Defined Segment</div>
<div class="btn" style="left:359.6px;top:454.7px;width:59.5px;height:12.5px;line-height:11px">Default Y Axis</div>
<div class="a" style="left:186px;top:467.5px;width:527px;height:9.5px;background:linear-gradient(to bottom,#bdbdbd,#bcbcc4 50%,#c2c2bc)"></div>
<div class="a" style="left:326.7px;top:468.8px;">LGWAS System (Version:  1.1.1018 ) by Capacitec, Inc., Ayer, MA, USA</div>
<div class="a" style="left:183px;top:18px;width:2.5px;height:462px;background:#1452e6"></div>
<div class="a" style="left:713.5px;top:18px;width:2.5px;height:462px;background:#0c1c98"></div>
<div class="a" style="left:712.4px;top:18px;width:1.2px;height:459.5px;background:#f0f8ff"></div>
<div class="a" style="left:183px;top:477.5px;width:533px;height:2.5px;background:#0c1c98"></div>
<div class="a" style="left:185.5px;top:476.6px;width:528px;height:1px;background:#f0f8ff"></div>
</body></html>
